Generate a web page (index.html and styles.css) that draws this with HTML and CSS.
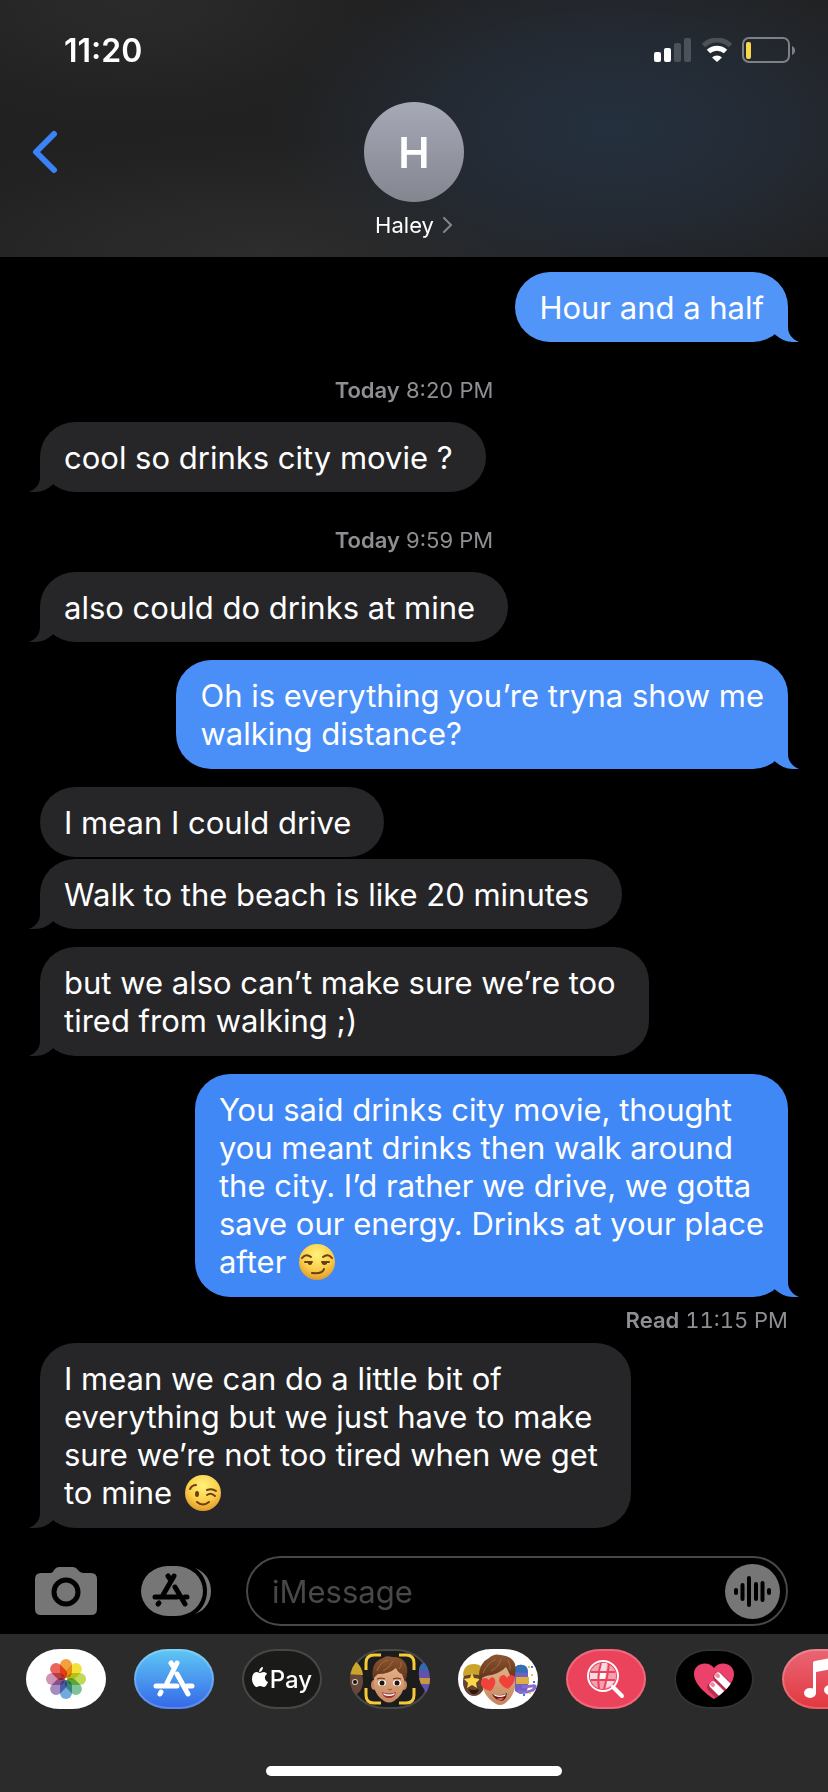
FILE: index.html
```
<!DOCTYPE html>
<html lang="en">
<head>
    <meta charset="UTF-8">
    <meta name="viewport" content="width=device-width, initial-scale=1.0">
    <title>Haley - Messages</title>
    <link rel="stylesheet" href="styles.css">
</head>
<body>
    <svg class="defs" aria-hidden="true">
        <symbol id="tail" viewBox="-13 -36 24 36">
            <path d="M-13-36H0V-15C0-8 4-3 11 0C9 .3 7 0 5 0C-2 0-8-3-13-7.5Z" fill="currentColor"/>
        </symbol>
        <radialGradient id="face" cx=".5" cy=".3" r=".7">
            <stop offset="0" stop-color="#fff27a"/>
            <stop offset=".6" stop-color="#fbce4a"/>
            <stop offset="1" stop-color="#e09a2c"/>
        </radialGradient>
        <linearGradient id="hair" x2="0" y2="1">
            <stop offset="0" stop-color="#8d5631"/>
            <stop offset="1" stop-color="#5c3119"/>
        </linearGradient>
        <linearGradient id="skin" x2="0" y2="1">
            <stop offset="0" stop-color="#e3b088"/>
            <stop offset="1" stop-color="#c4875f"/>
        </linearGradient>
    </svg>

    <header class="header">
        <div class="status">
            <span class="time">11:20</span>
            <div class="status-icons">
                <svg width="38" height="24" viewBox="0 0 38 24">
                    <rect y="14" width="7" height="10" rx="2" fill="#fff"/>
                    <rect x="10" y="10" width="7" height="14" rx="2" fill="#fff"/>
                    <rect x="20" y="5" width="7" height="19" rx="2" fill="#4c515a"/>
                    <rect x="30" width="7" height="24" rx="2" fill="#4c515a"/>
                </svg>
                <svg width="32" height="24" viewBox="0 0 32 24">
                    <path d="M2.5 7.5A19.500 19.500 0 0 1 29.500 7.500" fill="none" stroke="#4c5057" stroke-width="5"/>
                    <path d="M7.500 13.500A12.500 12.500 0 0 1 24.500 13.500" fill="none" stroke="#fff" stroke-width="5"/>
                    <path d="M11 19.500A7 7 0 0 1 21 19.500L16 24Z" fill="#fff"/>
                </svg>
                <svg width="54" height="26" viewBox="0 0 54 26">
                    <rect x="1" y="1" width="46" height="24" rx="6" fill="none" stroke="#7d8085" stroke-width="2"/>
                    <rect x="4" y="5" width="5" height="17" rx="2" fill="#f8d74a"/>
                    <path d="M50 9C54 10 54 17 50 18Z" fill="#7d8085"/>
                </svg>
            </div>
        </div>
        <div class="nav">
            <button type="button" class="back" aria-label="Back">
                <svg width="26" height="44" viewBox="0 0 26 44">
                    <path d="M22 4L4 22L22 40" fill="none" stroke="#3b82f7" stroke-width="6" stroke-linecap="round" stroke-linejoin="round"/>
                </svg>
            </button>
            <a href="#" class="contact">
                <span class="avatar">H</span>
                <span class="name">Haley
                    <svg width="10" height="16" viewBox="0 0 10 16">
                        <path d="M1 1L8 8L1 15" fill="none" stroke="#85868b" stroke-width="2" stroke-linecap="round"/>
                    </svg>
                </span>
            </a>
        </div>
    </header>

    <main class="messages">
        <p class="bubble sent light">Hour and a half<svg class="tail"><use href="#tail"/></svg></p>
        <p class="stamp"><b>Today</b> 8:20 PM</p>
        <p class="bubble received">cool so drinks city movie ?<svg class="tail"><use href="#tail"/></svg></p>
        <p class="stamp"><b>Today</b> 9:59 PM</p>
        <p class="bubble received">also could do drinks at mine<svg class="tail"><use href="#tail"/></svg></p>
        <p class="bubble long sent">Oh is everything you’re tryna show me<br>walking distance?<svg class="tail"><use href="#tail"/></svg></p>
        <p class="bubble received">I mean I could drive</p>
        <p class="bubble received joined">Walk to the beach is like 20 minutes<svg class="tail"><use href="#tail"/></svg></p>
        <p class="bubble long received">but we also can’t make sure we’re too<br>tired from walking ;)<svg class="tail"><use href="#tail"/></svg></p>
        <p class="bubble long sent deep">You said drinks city movie, thought<br>you meant drinks then walk around<br>the city. I’d rather we drive, we gotta<br>save our energy. Drinks at your place<br>after
            <svg class="emoji" viewBox="0 0 38 38" role="img" aria-label="smirking face">
                <circle cx="19" cy="19" r="18" fill="url(#face)"/>
                <g fill="none" stroke="#6b3f12" stroke-width="2" stroke-linecap="round">
                    <path d="M4 15Q8 10 13 14M25 14Q30 10 34 15"/>
                    <path d="M7 19H14M24 19H31M14 30Q25 31 26 26"/>
                </g>
                <path d="M10 19H14V21Q12 23 10 21ZM24 19H29V21Q26 23 24 21Z" fill="#6b3f12"/>
            </svg><svg class="tail"><use href="#tail"/></svg></p>
        <p class="receipt"><b>Read</b> 11:15 PM</p>
        <p class="bubble long received">I mean we can do a little bit of<br>everything but we just have to make<br>sure we’re not too tired when we get<br>to mine
            <svg class="emoji" viewBox="0 0 38 38" role="img" aria-label="winking face">
                <circle cx="19" cy="19" r="18" fill="url(#face)"/>
                <ellipse cx="13" cy="20" rx="2" ry="3" fill="#6b3f12"/>
                <g fill="none" stroke="#6b3f12" stroke-width="2" stroke-linecap="round">
                    <path d="M6 15Q8 11 12 11M23 16Q28 14 32 17"/>
                    <path d="M23 21Q27 18 31 22M13 28Q19 33 25 28"/>
                </g>
            </svg><svg class="tail"><use href="#tail"/></svg></p>
    </main>

    <form class="compose">
        <button type="button" class="camera" aria-label="Camera">
            <svg width="62" height="48" viewBox="0 0 62 48">
                <path d="M6 6H15Q18 6 19 3Q21 0 24 0H38Q41 0 43 3Q45 6 48 6H56Q62 6 62 12V42Q62 48 56 48H6Q0 48 0 42V12Q0 6 6 6Z" fill="#767676"/>
                <circle cx="31" cy="25" r="12" fill="none" stroke="#000" stroke-width="5"/>
            </svg>
        </button>
        <button type="button" class="apps" aria-label="Apps">
            <svg width="70" height="50" viewBox="0 0 70 50">
                <rect width="62" height="50" rx="27" ry="25" fill="#767676"/>
                <path d="M54 2C65 6 70 15 70 25C70 35 65 44 54 48C62 43 66 34 66 25C66 16 62 7 54 2Z" fill="#767676"/>
                <path d="M33 10L22 29M27 10L29 13M14 31H36M44 31H46M34 21L44 38M18 37L17 38" fill="none" stroke="#000" stroke-width="5" stroke-linecap="round"/>
            </svg>
        </button>
        <div class="field">
            <input type="text" placeholder="iMessage" aria-label="iMessage">
            <button type="button" class="audio" aria-label="Record audio">
                <svg width="55" height="55" viewBox="0 0 55 55">
                    <circle cx="27.500" cy="27.500" r="27.500" fill="#767676"/>
                    <path d="M11 26V29M17.500 21V35M24 14V41M31 20V35M37.500 19V36M44 26V29" stroke="#000" stroke-width="4" stroke-linecap="round"/>
                </svg>
            </button>
        </div>
    </form>

    <footer class="drawer">
        <nav class="app-row" aria-label="Message apps">
            <button type="button" class="app photos" aria-label="Photos">
                <svg viewBox="0 0 80 60">
                    <g transform="translate(40 30)">
                        <rect class="petal" x="-6" y="-20" width="12" height="19" rx="6" fill="#f3a03f"/>
                        <rect class="petal" x="-6" y="-20" width="12" height="19" rx="6" fill="#f3e13c" transform="rotate(45)"/>
                        <rect class="petal" x="-6" y="-20" width="12" height="19" rx="6" fill="#bfd95a" transform="rotate(90)"/>
                        <rect class="petal" x="-6" y="-20" width="12" height="19" rx="6" fill="#7dc598" transform="rotate(135)"/>
                        <rect class="petal" x="-6" y="-20" width="12" height="19" rx="6" fill="#74a9de" transform="rotate(180)"/>
                        <rect class="petal" x="-6" y="-20" width="12" height="19" rx="6" fill="#a58cc0" transform="rotate(225)"/>
                        <rect class="petal" x="-6" y="-20" width="12" height="19" rx="6" fill="#cf94b8" transform="rotate(270)"/>
                        <rect class="petal" x="-6" y="-20" width="12" height="19" rx="6" fill="#ea655c" transform="rotate(315)"/>
                    </g>
                </svg>
            </button>
            <button type="button" class="app store" aria-label="App Store">
                <svg viewBox="0 0 80 60">
                    <path d="M43 14L33 34M37 14L39 17M22 37H43M53 37H58M43 25L54 45M27 43L26 45" fill="none" stroke="#fff" stroke-width="5" stroke-linecap="round"/>
                </svg>
            </button>
            <button type="button" class="app pay">
                <svg class="apple" viewBox="0 0 16 20">
                    <path d="M11 0C11 3 9 5 7 5C7 2 9 0 11 0ZM8 6C9 6 10 5 12 5C13 5 15 6 15 7C12 9 12 13 16 15C15 18 13 20 12 20C10 20 10 19 8 19C6 19 6 20 5 20C2 20 0 15 0 12C0 8 2 5 5 5C6 5 7 6 8 6Z" fill="#fff"/>
                </svg>
                Pay
            </button>
            <button type="button" class="app memoji" aria-label="Memoji">
                <svg viewBox="0 0 80 60">
                    <!-- neighbours on each side -->
                    <ellipse cx="3" cy="32" rx="10" ry="14" fill="#66483a"/>
                    <path d="M-2 25Q0 14 5 12Q12 17 13 26Z" fill="#c9a52c"/>
                    <circle cx="5" cy="33" r="3" fill="#d8cdc6"/>
                    <circle cx="5" cy="33" r="2" fill="#1c1210"/>
                    <path d="M69 27Q68 18 73 14L82 12V48Q76 47 74 40Q69 34 69 27Z" fill="#6450ad"/>
                    <path d="M69 21Q70 14 74 14L82 12V23Z" fill="#3269b0"/>
                    <path d="M69 29H82V35H71Z" fill="#c59a3e"/>
                    <!-- face -->
                    <ellipse cx="24" cy="36" rx="3" ry="5" fill="#c4875f"/>
                    <ellipse cx="54" cy="36" rx="3" ry="5" fill="#c4875f"/>
                    <path d="M24 25Q24 18 39 18Q54 18 54 25V38Q52 47 44 52Q39 55 34 52Q26 47 24 38Z" fill="url(#skin)"/>
                    <path d="M23 31Q20 13 33 9Q36 6 42 8Q52 7 56 15Q59 22 55 33L52 25Q48 24 46 19Q39 25 28 25Q25 27 23 31Z" fill="url(#hair)"/>
                    <path d="M27 22Q30 13 38 11M33 22Q40 19 43 12M49 20Q52 17 51 13" fill="none" stroke="#a66a40" stroke-width="1"/>
                    <path d="M27 30Q31 28 35 30M43 30Q47 28 51 30" fill="none" stroke="#5c3119" stroke-width="1"/>
                    <ellipse cx="32" cy="34" rx="4" ry="3" fill="#fff"/>
                    <ellipse cx="47" cy="34" rx="4" ry="3" fill="#fff"/>
                    <circle cx="32" cy="34" r="2.500" fill="#21150f"/>
                    <circle cx="47" cy="34" r="2.500" fill="#21150f"/>
                    <path d="M38 40Q40 42 42 40" fill="none" stroke="#8e5533" stroke-width="1"/>
                    <path d="M32 43Q39 46 46 43Q45 49 39 49Q33 49 32 43Z" fill="#9e2f32"/>
                    <path d="M33 44Q39 47 45 44L44 46Q39 48 34 46Z" fill="#fff"/>
                    <path d="M16 21V14Q16 6 24 6H31M49 6H56Q64 6 64 14V21M16 39V46Q16 54 24 54H31M49 54H56Q64 54 64 46V39" fill="none" stroke="#f6c937" stroke-width="3"/>
                </svg>
            </button>
            <button type="button" class="app stickers" aria-label="Memoji stickers">
                <svg viewBox="0 0 80 60">
                    <ellipse cx="16" cy="33" rx="11" ry="14" fill="#66432f"/>
                    <path d="M5 27Q5 15 16 15Q26 15 27 27Q16 24 5 27Z" fill="#c9a52c"/>
                    <path d="M14 24L16 29L22 30L18 34L19 39L14 36L9 39L10 34L6 30L12 29Z" fill="#fbd748"/>
                    <path d="M11 40Q16 42 21 40Q20 45 16 45Q12 45 11 40Z" fill="#321511"/>
                    <path d="M57 20Q58 15 65 16Q70 17 70 23V38Q69 45 62 45L57 42Z" fill="#7160c4"/>
                    <path d="M57 23V18Q64 13 69 19L70 24Z" fill="#316fb5"/>
                    <path d="M58 28H71V35H58Z" fill="#e0ae43"/>
                    <path d="M60 42Q68 45 75 41Q80 36 74 37L64 38" fill="none" stroke="#8a6ccc" stroke-width="3"/>
                    <path d="M70 18H72M73 26H75M71 44H73" stroke="#ecc640" stroke-width="2"/>
                    <path d="M73 18H75M65 46H67M75 33H77" stroke="#3c78db" stroke-width="2"/>
                    <path d="M24 26Q24 17 41 17Q58 17 57 26V39Q54 50 46 55Q42 57 38 55Q29 50 25 40Z" fill="url(#skin)"/>
                    <path d="M21 31Q20 14 31 9Q36 4 43 6Q54 7 57 15Q59 24 55 33Q52 25 48 18Q42 25 28 27Q23 29 21 31Z" fill="url(#hair)"/>
                    <path d="M25 24Q29 14 38 10M33 22Q41 18 43 10M52 21Q53 17 50 11" fill="none" stroke="#a66a40" stroke-width="1"/>
                    <path d="M33 42Q26 41 23 36Q22 30 27 29Q29 29 31 31Q33 27 36 29Q40 33 33 42Z" fill="#ef4238"/>
                    <path d="M50 40Q43 37 41 32Q41 26 46 26Q48 27 49 29Q52 24 56 27Q59 32 50 40Z" fill="#ef4238"/>
                    <path d="M34 45Q42 48 49 44Q48 52 43 52Q37 51 34 45Z" fill="#641a1b"/>
                    <path d="M35 45Q42 48 48 45L47 47Q42 49 37 47Z" fill="#fff"/>
                    <path d="M39 50Q43 48 46 49Q44 52 41 52Z" fill="#e2595a"/>
                </svg>
            </button>
            <button type="button" class="app images" aria-label="Images">
                <svg viewBox="0 0 80 60">
                    <circle cx="37" cy="27" r="13" fill="#f3a1b0"/>
                    <path d="M34 14H41L40 24H33ZM24 24H33L32 30H24ZM41 30H49L46 36L40 39Z" fill="#fadbe1"/>
                    <path d="M34 24H40L39 30H33Z" fill="#fff"/>
                    <path d="M25 23H49M25 31H49M35 14Q31 27 33 40M43 15Q42 27 38 40" fill="none" stroke="#ec435c" stroke-width="2"/>
                    <circle cx="37" cy="27" r="15" fill="none" stroke="#fff" stroke-width="2"/>
                    <path d="M47 38L56 47" stroke="#fff" stroke-width="4" stroke-linecap="round"/>
                </svg>
            </button>
            <button type="button" class="app touch" aria-label="Digital Touch">
                <svg viewBox="0 0 80 60">
                    <clipPath id="heart">
                        <path d="M40 50C32 45 20 35 20 25C20 14 34 11 40 19C46 11 60 14 60 25C60 35 48 45 40 50Z"/>
                    </clipPath>
                    <g clip-path="url(#heart)">
                        <rect width="80" height="60" fill="#ec416b"/>
                        <path d="M38 38L54 54M44 28L62 46" stroke="#b92d50" stroke-width="10" stroke-linecap="round"/>
                        <path d="M39 36L55 52M44 27L62 45" stroke="#fff" stroke-width="7" stroke-linecap="round"/>
                        <path d="M38 35L39 36M43 26L44 27" stroke="#f18ba4" stroke-width="4" stroke-linecap="round"/>
                    </g>
                </svg>
            </button>
            <button type="button" class="app music" aria-label="Music">
                <svg viewBox="0 0 80 60">
                    <path d="M31 14Q31 12 33 12L53 8V41H50V20L34 23V44H31Z" fill="#fff"/>
                    <ellipse cx="28" cy="44" rx="6" ry="5" fill="#fff"/>
                    <ellipse cx="48" cy="41" rx="6" ry="5" fill="#fff"/>
                </svg>
            </button>
        </nav>
        <div class="home-bar"></div>
    </footer>
</body>
</html>
```
FILE: styles.css
```
* {
    box-sizing: border-box;
}
body {
    margin: 0;
    min-height: 100vh;
    display: flex;
    flex-direction: column;
    background: #000;
    color: #fff;
    font-family: Inter, "Liberation Sans", sans-serif;
    font-size: 31px;
    overflow-x: hidden;
}
button {
    padding: 0;
    border: none;
    background: none;
    color: inherit;
    font-family: inherit;
    cursor: pointer;
}
svg {
    display: block;
    flex-shrink: 0;
}
p {
    margin: 0;
}
.defs {
    position: absolute;
    width: 0;
    height: 0;
}

/* header */
.header {
    background:
        radial-gradient(ellipse 340px 180px at 74% 50%, #24303e 0%, #242b35 45%, rgba(36, 38, 42, 0) 100%),
        radial-gradient(ellipse 400px 120px at 32% 100%, #2d2d2d, rgba(45, 45, 45, 0)),
        radial-gradient(ellipse 260px 120px at 16% 0%, #2b2b2b, rgba(43, 43, 43, 0)),
        #212121;
}
.status {
    display: flex;
    justify-content: space-between;
    align-items: center;
    height: 100px;
    padding: 0 32px 0 64px;
}
.time {
    font-size: 32px;
    font-weight: 600;
}
.status-icons {
    display: flex;
    align-items: center;
    gap: 9px;
}
.nav {
    display: grid;
    grid-template-columns: 1fr auto 1fr;
    padding: 2px 32px 17px;
}
.back {
    align-self: start;
    justify-self: start;
    margin-top: 28px;
}
.contact {
    display: flex;
    flex-direction: column;
    align-items: center;
    gap: 8px;
    color: #fff;
    text-decoration: none;
}
.avatar {
    width: 100px;
    height: 100px;
    border-radius: 50%;
    background: linear-gradient(#a6a9b6, #83868f);
    font-size: 42px;
    font-weight: 600;
    line-height: 102px;
    text-align: center;
}
.name {
    display: flex;
    align-items: center;
    gap: 9px;
    font-size: 22px;
    line-height: 30px;
}

/* conversation */
.messages {
    display: flex;
    flex-direction: column;
    align-items: flex-start;
    padding: 15px 40px 28px;
}
.bubble {
    position: relative;
    margin-top: 18px;
    padding: 17px 24px 15px;
    border-radius: 35px;
    line-height: 38px;
}
.bubble:first-child {
    margin-top: 0;
}
.bubble.long {
    padding-bottom: 16px;
}
.bubble.joined {
    margin-top: 2px;
}
.received {
    padding-right: 33px;
    background: #262628;
}
.sent {
    align-self: flex-end;
    background: #4a8ef8;
}
.sent.light {
    background: #5295f8;
}
.sent.deep {
    background: #4188f7;
}
.tail {
    position: absolute;
    right: -11px;
    bottom: 0;
    width: 24px;
    height: 36px;
    color: #4a8ef8;
}
.light .tail {
    color: #5295f8;
}
.deep .tail {
    color: #4188f7;
}
.received .tail {
    right: auto;
    left: -11px;
    color: #262628;
    transform: scaleX(-1);
}
.emoji {
    display: inline-block;
    width: 38px;
    height: 38px;
    margin-left: 3px;
    vertical-align: top;
}
.stamp,
.receipt {
    color: #8e8e93;
    font-size: 22px;
    line-height: 28px;
}
.stamp {
    align-self: center;
    margin-top: 34px;
}
.receipt {
    align-self: flex-end;
    margin-top: 9px;
    font-variant-numeric: tabular-nums;
}
.receipt + .bubble {
    margin-top: 9px;
}
b {
    font-weight: 600;
}

/* compose bar */
.compose {
    display: flex;
    align-items: center;
    margin-top: auto;
    padding: 0 40px 8px 35px;
}
.apps {
    margin: 0 35px 0 44px;
}
.field {
    flex: 1;
    display: flex;
    align-items: center;
    min-width: 0;
    height: 70px;
    padding: 0 6px 0 24px;
    border: 2px solid #48484a;
    border-radius: 35px;
}
.field input {
    flex: 1;
    min-width: 0;
    padding: 0;
    border: none;
    outline: none;
    background: none;
    color: #fff;
    font-family: inherit;
    font-size: 31px;
}
.field input::placeholder {
    color: #48484a;
    opacity: 1;
}

/* app drawer */
.drawer {
    padding: 15px 0 16px;
    background: #2b2b2b;
}
.app-row {
    display: flex;
    gap: 28px;
    padding-left: 26px;
    overflow: hidden;
}
.app {
    display: flex;
    flex: none;
    justify-content: center;
    align-items: center;
    width: 80px;
    height: 60px;
    border-radius: 34px / 30px;
    overflow: hidden;
    box-shadow: inset 0 0 0 2px rgba(255, 255, 255, 0.2);
}
.app svg {
    width: 80px;
    height: 60px;
}
.photos,
.stickers {
    background: #fff;
}
.petal {
    mix-blend-mode: multiply;
}
.store {
    background: linear-gradient(#5fc8f5, #3467e8);
}
.pay {
    gap: 2px;
    background: #1a1a19;
    font-size: 24px;
    font-weight: 500;
}
.app .apple {
    width: 16px;
    height: 20px;
    margin-bottom: 4px;
}
.memoji {
    background: #1c1c1c;
}
.images {
    background: #ec435c;
}
.touch {
    background: #000;
}
.music {
    background: linear-gradient(#e96675, #e2383f);
}
.home-bar {
    width: 296px;
    height: 10px;
    margin: 57px auto 0;
    border-radius: 5px;
    background: #fff;
}
```
